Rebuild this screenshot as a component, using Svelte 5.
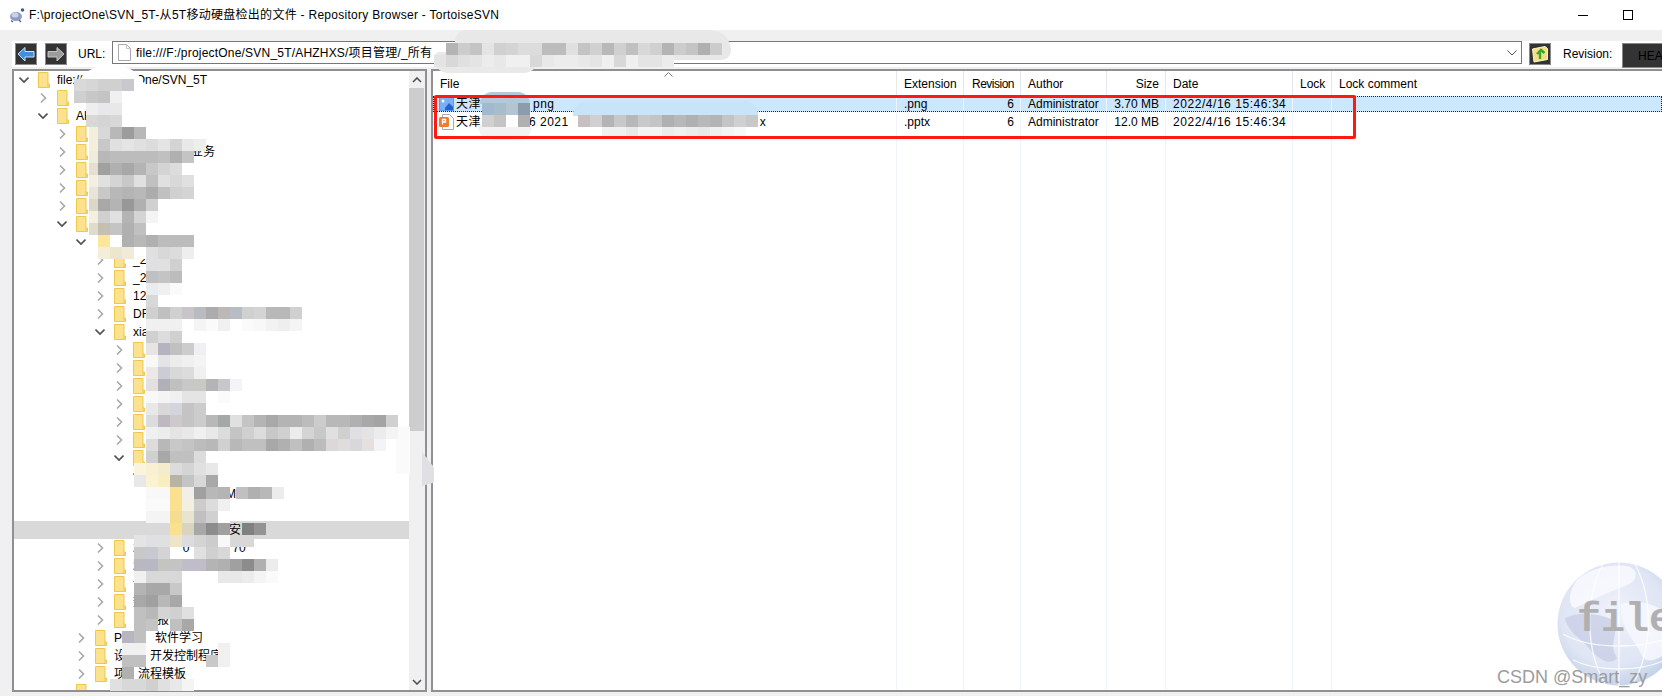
<script>
  const tree = [
    { l: 0, c: 'd', f: 1, parts: ['file:///F:/projectOne/SVN_5T'] },
    { l: 1, c: 'r', f: 1, parts: [] },
    { l: 1, c: 'd', f: 1, parts: ['AH'] },
    { l: 2, c: 'r', f: 1, parts: [] },
    { l: 2, c: 'r', f: 1, parts: [96, '业务'] },
    { l: 2, c: 'r', f: 1, parts: [] },
    { l: 2, c: 'r', f: 1, parts: [] },
    { l: 2, c: 'r', f: 1, parts: [] },
    { l: 2, c: 'd', f: 1, parts: [] },
    { l: 3, c: 'd', f: 0, parts: [24, '有'] },
    { l: 4, c: 'r', f: 1, parts: ['_2'] },
    { l: 4, c: 'r', f: 1, parts: ['_2'] },
    { l: 4, c: 'r', f: 1, parts: ['12'] },
    { l: 4, c: 'r', f: 1, parts: ['DF'] },
    { l: 4, c: 'd', f: 1, parts: ['xia'] },
    { l: 5, c: 'r', f: 1, parts: [] },
    { l: 5, c: 'r', f: 1, parts: [] },
    { l: 5, c: 'r', f: 1, parts: [] },
    { l: 5, c: 'r', f: 1, parts: [] },
    { l: 5, c: 'r', f: 1, parts: [] },
    { l: 5, c: 'r', f: 1, parts: [] },
    { l: 5, c: 'd', f: 1, parts: [] },
    { l: 6, c: 'd', f: 0, parts: [] },
    { l: 7, c: '', f: 0, parts: [36, 'M'] },
    { l: 7, c: '', f: 0, parts: [] },
    { l: 7, c: '', f: 0, sel: 1, parts: [39, '安'] },
    { l: 4, c: 'r', f: 1, parts: ['2', 43, '0', 43, '70'] },
    { l: 4, c: 'r', f: 1, parts: ['2'] },
    { l: 4, c: 'r', f: 1, parts: ['论'] },
    { l: 4, c: 'r', f: 1, parts: ['数'] },
    { l: 4, c: 'r', f: 1, parts: [24, '报'] },
    { l: 3, c: 'r', f: 1, parts: ['Pr', 29, '软件学习'] },
    { l: 3, c: 'r', f: 1, parts: ['设', 24, '开发控制程序'] },
    { l: 3, c: 'r', f: 1, parts: ['项', 12, '流程模板'] },
    { l: 2, c: '', f: 1, parts: [] }
  ];

  const columns = ['file', 'ext', 'rev', 'auth', 'size', 'date', 'lock', 'comment'];
  const heads = ['File', 'Extension', 'Revision', 'Author', 'Size', 'Date', 'Lock', 'Lock comment'];
  const files = [
    { name: ['天津', 52, 'png'], ext: '.png', rev: '6', auth: 'Administrator', size: '3.70 MB', date: '2022/4/16 15:46:34', kind: 'png', sel: true },
    { name: ['天津', 48, '6 2021', 191, 'x'], ext: '.pptx', rev: '6', auth: 'Administrator', size: '12.0 MB', date: '2022/4/16 15:46:34', kind: 'ppt', sel: false }
  ];

  // y, x, cell colours (2 digits = grey, 6 digits = full hex)
  const mosaic = [
    // url box
    [43, 446, 'b4 cc c4 e4 d0 d4 dc dc bc bc e0 c4 d0 b8 d0 c0 d8 d0 b4 cc c4 b0 cc'],
    [55, 434, 'e4 d8 e0 e4 ec e8 f0 f0 d8 e8 ec ec e8 e4 f0 d8 f0 e4 e4 ec'],
    // tree: cream column left of the smear
    [127, 89, 'f4eedc'], [139, 89, 'f4eedc'], [151, 89, 'f0ecdc'], [163, 89, 'e4dfd0'],
    [175, 89, 'f4efe0'], [187, 89, 'e8e4d8'], [199, 89, 'dcd8c8'], [211, 89, 'f4efe0'], [223, 89, 'e0dccc'],
    // tree
    [79, 74, 'd9 d6 d0 d0 c8c8cf'],
    [91, 74, 'cf c8 c4 f0f0f2'],
    [103, 86, 'ee e8e8ea e8'],
    [115, 86, 'd8 d4 d8'],
    [127, 98, 'd8 b8 9c b8'],
    [139, 98, 'c8 e0 e4 e0 dc e4 d4 e8 ee'],
    [151, 98, 'b8 bc bc bc bc c0 b0 c4'],
    [163, 98, 'a0 b0 a8 b4 c8 d4 dc'],
    [175, 98, 'e0 d4 c8 e0 c0 e0 d8 e0'],
    [187, 98, 'c8 b8 b4 b8 ac c0 d0 d4'],
    [199, 98, 'a8 b4 98 b0 d0'],
    [211, 98, 'd0 e0 b4 d4 f4'],
    [223, 98, 'c4bfb0 c4 b0 c0'],
    [235, 98, 'fbe69c ff b0 b8 b0 bc bc bc'],
    [247, 98, 'f4eed8 ece6cc f0ead8 ff e0 d8 dc ee'],
    [259, 146, 'e0 e0 d0'],
    [271, 146, 'c0 c4 bc'],
    [283, 146, 'ec f0 fa'],
    [295, 146, 'd8'],
    [307, 146, 'd0 c0 d0 c8c4c8 b8bcc0 ac bcb8b8 b8bcc4 d0 d4 b8 b8 d0'],
    [319, 146, 'f0 f0 f0 ff f4 fa f0 ff fa f8 f2 ee f4'],
    [331, 146, 'd0 dc d0'],
    [343, 146, 'e8e4e4 b4b4c0 c0 cc f0f0f2'],
    [355, 146, 'f8 e4e4e8 ec f0 f4'],
    [367, 146, 'ece8e8 ccccd4 d8 dc f0'],
    [379, 146, 'e4e0e0 b0b0b8 c0 c8 c8c8c4 b4b4b8 c8 f4f4f8'],
    [391, 146, 'f8 f4 f0 e4 e4 ff fa ff'],
    [403, 146, 'e8 d8 d4d4dc c4 cc'],
    [415, 146, 'dc c0b8c0 ccc8cc c4 cc b8 a4a8a8 e0 c4 b4 a8 b4 b4 bc cc b8 b8 b0 a8 a4 d0'],
    [427, 146, 'f0 ec e4 e8 f0 e8 dc c4 d0 dc c8 d0 ec d4 c8 e0 d0 e0e0e4 e4 ec f4 fa'],
    [439, 146, 'dc b8 c8 c4 bc b8 d0 b8 c0 c0 a8 b0 c0 b0 bc dcd8d8 e0dcdc d8d8dc e4e0e0 f4f4f8'],
    [451, 146, 'd0 a8 c0 c0 dc'],
    [463, 134, 'fbf4dc f8f0d0 f4eccc dc d4 e0 e8'],
    [475, 134, 'e8 faf2d0 f8eec0 b8b4a4 c4 d8 a8'],
    [487, 146, 'f8 f8 fbe090 f0f0e8 a0 b8 b4'],
    [487, 236, 'c0 b0 b8 ec'],
    [499, 146, 'fa fa fbe090 f4f0e0 cc dc f0'],
    [511, 146, 'f4 f4 f4dc90 e8e4d0 c0 d0 ff'],
    [523, 146, 'd9 d9 fbe090 d8d4c0 a8 8c a0'],
    [523, 242, '80 94'],
    [535, 134, 'e4 e0e0e4 e0 eee4c8 dcdce0 d4 cc f8 d8 d8'],
    [547, 134, 'c8 c8c8d0 d4d4d8'],
    [547, 194, 'e0 d0 d8'],
    [559, 134, 'b8b8c0 b8b8c4 c4c4c0 c4 c0bcc8 c0bcc8 b4 b0 a0 8c b0 ec'],
    [571, 134, 'f0 d8 d8 d8'],
    [571, 218, 'e8 e8 ec f4 fa'],
    [583, 134, 'b4 a8 a8 c8'],
    [595, 134, 'a8 a0 b8 a8'],
    [607, 134, 'c0 b8 d4 d0 e0'],
    [619, 134, 'c0 c4'],
    [619, 170, 'c0 a8'],
    [631, 122, 'b8b4c0 c0'],
    [643, 122, 'f0 f0'],
    [643, 218, 'f0'],
    [655, 122, 'c0 c0'],
    [655, 206, 'c8 f0'],
    [667, 122, 'b0'],
    [679, 110, 'e0 d8 d8 d0 e0 e8 f4'],
    // file rows
    [103, 482, 'a0b8d0 a8bccc b4c4d0 8c9cac'],
    [115, 482, 'd0 c4 ff b0'],
    [115, 578, 'c8c0c0 d0 b4 c8 b8 c8 c4 b0 b8 b0 b8 b4 c4 d0 c8'],
    [127, 602, 'f0 f0 e8 f4 f4 ec f0 ec e8 f0 f4 f8']
  ];

  const hex = (c) => (c.length === 2 ? '#' + c + c + c : '#' + c);
  const cells = mosaic.map(([y, x, s]) => ({ y, x, cols: s.split(' ').map(hex) }));
</script>

{#snippet folder()}
  <svg class="folder" viewBox="0 0 12 16" width="12" height="16" aria-hidden="true">
    <path d="M.5.5h9.5v11.5h1.5v3.5H.5z" fill="#fde28e" stroke="#efc74d" />
    <path d="M10 12v3" stroke="#efc74d" fill="none" />
  </svg>
{/snippet}

{#snippet chevron(c)}
  <span class="chev">
    {#if c === 'r'}
      <svg viewBox="0 0 10 12" width="10" height="12" aria-hidden="true"><path d="M3 1.5 7.5 6 3 10.5" fill="none" stroke="#a8a8a8" stroke-width="1.6" /></svg>
    {:else if c === 'd'}
      <svg viewBox="0 0 10 12" width="10" height="12" aria-hidden="true"><path d="M.5 3.5 5 8l4.500-4.500" fill="none" stroke="#505050" stroke-width="1.6" /></svg>
    {/if}
  </span>
{/snippet}

{#snippet spaced(parts)}
  {#each parts as p}
    {#if typeof p === 'number'}<span class="gap" style="width:{p}px"></span>{:else}<span>{p}</span>{/if}
  {/each}
{/snippet}

<div class="app">
  <header class="titlebar">
    <svg class="appicon" viewBox="0 0 16 16" width="16" height="16" aria-hidden="true">
      <ellipse cx="7" cy="9.500" rx="6" ry="4.500" fill="#8f9dc4" />
      <ellipse cx="6" cy="8" rx="3.500" ry="2.500" fill="#c8d2ea" />
      <circle cx="13.500" cy="3" r="1.800" fill="#4a5a88" />
      <path d="M2 13.500 4 15M10 13l2 2" stroke="#5a6688" stroke-width="1.400" />
    </svg>
    <span class="title">F:\projectOne\SVN_5T-从5T移动硬盘检出的文件 - Repository Browser - TortoiseSVN</span>
    <span class="winbtns">
      <span class="min"></span>
      <span class="max"></span>
    </span>
  </header>

  <div class="toolbar">
    <button class="tbtn" aria-label="Back">
      <svg viewBox="0 0 20 20" width="20" height="20" aria-hidden="true"><path d="M2 10 9 3.500v4h9v5.500H9v4z" fill="#3f8fe4" stroke="#cfe3f8" stroke-width="1" /></svg>
    </button>
    <button class="tbtn fwd" aria-label="Forward">
      <svg viewBox="0 0 20 20" width="20" height="20" aria-hidden="true"><path d="M18 10 11 3.500v4H2v5.500h9v4z" fill="#9c9c9c" stroke="#c4c4c4" stroke-width="1" /></svg>
    </button>
    <span class="urllabel">URL:</span>
    <div class="combo">
      <svg class="page" viewBox="0 0 13 17" width="13" height="17" aria-hidden="true">
        <path d="M.5.500h8l4 4v12H.5z" fill="#fff" stroke="#a8a8a8" /><path d="M8.500.5v4h4" fill="none" stroke="#c4c4c4" />
      </svg>
      <span class="urltext">file:///F:/projectOne/SVN_5T/AHZHXS/项目管理/_所有</span>
      <svg class="combochev" viewBox="0 0 10 6" width="10" height="6" aria-hidden="true"><path d="M.5.500 5 5 9.500.5" fill="none" stroke="#555" /></svg>
    </div>
    <button class="tbtn up" aria-label="Up">
      <svg viewBox="0 0 20 20" width="20" height="20" aria-hidden="true">
        <path d="M2.500 5 15 2.500l2.500 2v11L4 18z" fill="#f3df88" stroke="#fff6c8" />
        <path d="M10 15V7.500M7 10l4-4 3.500 3" fill="none" stroke="#3fa52c" stroke-width="2.400" />
      </svg>
    </button>
    <span class="revlabel">Revision:</span>
    <button class="head">HEAD</button>
  </div>

  <main class="panes">
    <section class="treepane">
      <div class="tree">
        {#each tree as row}
          <div class="trow" class:sel={row.sel} style="--l:{row.l}">
            {@render chevron(row.c)}
            <span class="fslot">{#if row.f}{@render folder()}{/if}</span>
            <span class="tlabel">{@render spaced(row.parts)}</span>
          </div>
        {/each}
      </div>
      <div class="scroll">
        <span class="sarrow"><svg viewBox="0 0 10 6" width="10" height="6" aria-hidden="true"><path d="M1 5 5 1l4 4" fill="none" stroke="#505050" stroke-width="1.600" /></svg></span>
        <span class="thumb"></span>
        <span class="strack"></span>
        <span class="sarrow"><svg viewBox="0 0 10 6" width="10" height="6" aria-hidden="true"><path d="M1 1l4 4 4-4" fill="none" stroke="#505050" stroke-width="1.600" /></svg></span>
      </div>
    </section>

    <section class="listpane">
      <div class="grid headrow">
        {#each heads as h, i}
          <div class="cell {columns[i]}">{h}</div>
        {/each}
        <svg class="sortcaret" viewBox="0 0 9 5" width="9" height="5" aria-hidden="true"><path d="M.5 4.500 4.500.5l4 4" fill="none" stroke="#777" /></svg>
      </div>
      {#each files as f}
        <div class="grid frow" class:fsel={f.sel}>
          <div class="cell file">
            {#if f.kind === 'png'}
              <svg class="ficon" viewBox="0 0 15 14" width="15" height="14" aria-hidden="true">
                <rect width="15" height="14" fill="#5a9cf0" /><path d="M1 1h13v12H1z" fill="#79b0f5" /><circle cx="4" cy="4" r="1.500" fill="#fff" /><path d="M6 11l4-5 4 4v3H6z" fill="#1f62d0" />
              </svg>
            {:else}
              <svg class="ficon" viewBox="0 0 15 16" width="15" height="16" aria-hidden="true">
                <path d="M3.500.5h7l4 4v11h-11z" fill="#fff" stroke="#aaa" />
                <rect x="0" y="3" width="10" height="10" rx="1.500" fill="#ef7a30" /><path d="M3.500 10.500v-5h3v2.500h-3" fill="none" stroke="#fff" stroke-width="1.300" />
              </svg>
            {/if}
            {@render spaced(f.name)}
          </div>
          <div class="cell ext">{f.ext}</div>
          <div class="cell rev">{f.rev}</div>
          <div class="cell auth">{f.auth}</div>
          <div class="cell size">{f.size}</div>
          <div class="cell date">{f.date}</div>
          <div class="cell lock"></div>
          <div class="cell comment"></div>
        </div>
      {/each}
      <div class="grid filler">
        {#each columns as c}<div class="cell {c}"></div>{/each}
      </div>
      <svg class="globe" viewBox="0 0 124 124" width="124" height="124" aria-hidden="true">
        <defs>
          <radialGradient id="gl" cx="0.45" cy="0.42" r="0.6">
            <stop offset="0" stop-color="#f0f2fb" />
            <stop offset="0.7" stop-color="#dfe5f4" />
            <stop offset="1" stop-color="#c3d2e8" />
          </radialGradient>
        </defs>
        <circle cx="62" cy="62" r="61.500" fill="url(#gl)" />
        <path d="M20 18C30 8 50 2 70 4 84 8 80 20 68 24 52 30 34 38 18 46 10 44 12 28 20 18Z" fill="#fbfcff" opacity=".75" />
        <path d="M8 56C20 50 40 50 56 58 64 70 50 80 60 96 52 106 38 94 30 84 24 76 12 72 8 56Z" fill="#c4cbe4" opacity=".7" />
        <path d="M64 42C84 36 108 44 118 62L112 88C100 100 88 102 84 92 78 78 62 66 64 42Z" fill="#f6f8fe" opacity=".85" />
        <g fill="none" stroke="#fff" stroke-width="1.300" opacity=".85">
          <path d="M6 72C34 88 90 88 118 72" />
          <path d="M16 98C40 110 84 110 108 98" />
          <path d="M46 2C26 40 30 90 48 122" />
          <path d="M78 2C98 40 94 90 76 122" />
          <path d="M62 0V124" />
        </g>
      </svg>
      <span class="globetext">file</span>
    </section>
  </main>

  <!-- smears and pixelation laid over the screenshot -->
  <div class="blob b-url"></div>
  <div class="blob b-url2"></div>
  <div class="blob b-root"></div>
  <div class="blob b-side"></div>
  <div class="blob b-scroll"></div>
  <div class="blob b-row"></div>
  <div class="blob b-row1"></div>
  <div class="blob b-row2"></div>
  {#each cells as m}
    <div class="mrow" style="left:{m.x}px;top:{m.y}px">
      {#each m.cols as c}<span class="m" style="background:{c}"></span>{/each}
    </div>
  {/each}

  <div class="redbox"></div>
  <span class="csdn">CSDN @Smart_zy</span>
</div>

<style>
  :global(body) { margin: 0; }
  .app {
    position: relative;
    width: 1662px;
    height: 696px;
    overflow: hidden;
    display: flex;
    flex-direction: column;
    background: #f0f0f0;
    color: #000;
    font: 12px/16px "Liberation Sans", "Noto Sans CJK SC", sans-serif;
  }
  .titlebar {
    height: 30px;
    flex: none;
    background: #fff;
    display: flex;
    align-items: center;
    padding-left: 9px;
    box-sizing: border-box;
  }
  .appicon { flex: none; margin-right: 4px; }
  .title { letter-spacing: 0.28px; }
  .winbtns { margin-left: auto; display: flex; align-items: center; padding-right: 29px; gap: 35px; }
  .min { width: 10px; height: 1px; background: #000; }
  .max { width: 8px; height: 8px; border: 1px solid #000; }

  .toolbar {
    margin: 11px -20px 0 12px;
    height: 26px;
    flex: none;
    background: #fff;
    display: flex;
    align-items: flex-start;
    padding-left: 3px;
  }
  .tbtn {
    flex: none;
    width: 22px;
    height: 22px;
    margin-top: 2px;
    padding: 0;
    border: 1px solid #8a8a8a;
    background: #333;
    display: flex;
    align-items: center;
    justify-content: center;
  }
  .fwd { margin-left: 8px; }
  .urllabel { margin: 5px 0 0 11px; width: 34px; flex: none; }
  .combo {
    flex: 1;
    height: 23px;
    box-sizing: border-box;
    border: 1.5px solid #777;
    display: flex;
    align-items: center;
    padding: 0 4px 0 5px;
  }
  .page { flex: none; margin-right: 5px; }
  .urltext { flex: 1; letter-spacing: 0.2px; }
  .combochev { flex: none; }
  .up { margin-left: 7px; }
  .revlabel { margin: 5px 0 0 12px; width: 59px; flex: none; }
  .head {
    flex: none;
    width: 60px;
    height: 25px;
    margin-top: 2px;
    padding: 0 0 0 15px;
    border: 1px solid #888;
    background: #333;
    color: #000;
    font: inherit;
    text-align: left;
  }

  .panes {
    margin-top: 2px;
    height: 623px;
    display: flex;
    gap: 4px;
    padding-left: 12px;
  }
  .treepane, .listpane {
    box-sizing: border-box;
    border: 2px solid #8f8f94;
    background: #fff;
    overflow: hidden;
  }
  .treepane { width: 415px; flex: none; display: flex; }
  .listpane { position: relative; flex: 1; display: flex; flex-direction: column; border-right: 0; }

  .tree { width: 395px; flex: none; }
  .trow {
    height: 18px;
    display: flex;
    align-items: center;
    padding-left: calc(5px + var(--l) * 19px);
    white-space: nowrap;
  }
  .trow.sel { background: #d9d9d9; }
  .chev { width: 10px; flex: none; display: flex; margin-right: 9px; }
  .fslot { width: 12px; height: 16px; flex: none; margin-right: 7px; display: flex; }
  .folder { display: block; }
  .tlabel { display: flex; }
  .gap { display: inline-block; flex: none; }

  .scroll { flex: 1; display: flex; flex-direction: column; background: #f0f0f0; }
  .sarrow { height: 17px; flex: none; display: flex; align-items: center; justify-content: center; }
  .thumb { height: 343px; flex: none; background: #cdcdcd; margin-right: 1px; }
  .strack { flex: 1; }

  .grid {
    display: grid;
    grid-template-columns: 464px 67px 57px 86px 59px 127px 39px 1fr;
  }
  .headrow { position: relative; height: 24px; flex: none; }
  .sortcaret { position: absolute; left: 231px; top: 1px; }
  .cell {
    box-sizing: border-box;
    padding: 0 6px 0 7px;
    border-right: 1px solid #eef4fb;
    display: flex;
    align-items: center;
    white-space: nowrap;
    min-width: 0;
  }
  .rev, .size { justify-content: flex-end; }
  .comment { border-right: 0; }
  .headrow .cell { padding-top: 1px; border-right-color: #e4e8ee; }
  .headrow .rev { letter-spacing: -0.5px; }
  .frow { height: 18px; flex: none; }
  .frow.fsel {
    height: 16px;
    margin: 1px 0;
    background: #cce8ff;
    outline: 1px dotted #222;
    outline-offset: -1px;
  }
  .frow .file { letter-spacing: 0.5px; }
  .frow .date { letter-spacing: 0.55px; }
  .ficon { flex: none; margin: 0 2px 0 -1px; }
  .filler { flex: 1; }

  .globe { position: absolute; left: 1124px; top: 491px; }
  .globetext {
    position: absolute;
    left: 1144px;
    top: 528px;
    color: #b0b0b0;
    font: bold 40px/44px "Liberation Mono", monospace;
  }

  .blob { position: absolute; }
  .b-url { left: 455px; top: 30px; width: 276px; height: 30px; background: #e8e8e8; border-radius: 12px 22px 10px 10px; }
  .b-url2 { left: 435px; top: 52px; width: 105px; height: 21px; background: #e9e9e9; border-radius: 6px 6px 24px 18px; }
  .b-root { left: 75px; top: 66px; width: 72px; height: 40px; background: #fff; border-radius: 30px 30px 0 0; }
  .b-side { left: 422px; top: 452px; width: 12px; height: 34px; background: #e0e0e4; clip-path: polygon(0 0, 100% 45%, 100% 90%, 0 100%); }
  .b-scroll { left: 396px; top: 430px; width: 14px; height: 44px; background: #fafafa; }
  .b-row { left: 478px; top: 125px; width: 54px; height: 15px; background: #f2f2f2; border-radius: 0 0 14px 14px; }
  .b-row1 { left: 480px; top: 92px; width: 50px; height: 12px; background: #b4c8dc; border-radius: 18px 18px 0 0; }
  .b-row2 { left: 573px; top: 101px; width: 185px; height: 15px; background: #c8e4f8; border-radius: 14px 14px 0 0; }

  .mrow { position: absolute; display: flex; }
  .m { width: 12px; height: 12px; flex: none; }

  .redbox {
    position: absolute;
    left: 434px;
    top: 95px;
    width: 922px;
    height: 44px;
    box-sizing: border-box;
    border: 3px solid #ff1a10;
    border-radius: 2px;
  }
  .csdn {
    position: absolute;
    left: 1497px;
    top: 666px;
    color: #9c9c9c;
    font: 18px/22px "Liberation Sans", sans-serif;
    white-space: nowrap;
  }
</style>
